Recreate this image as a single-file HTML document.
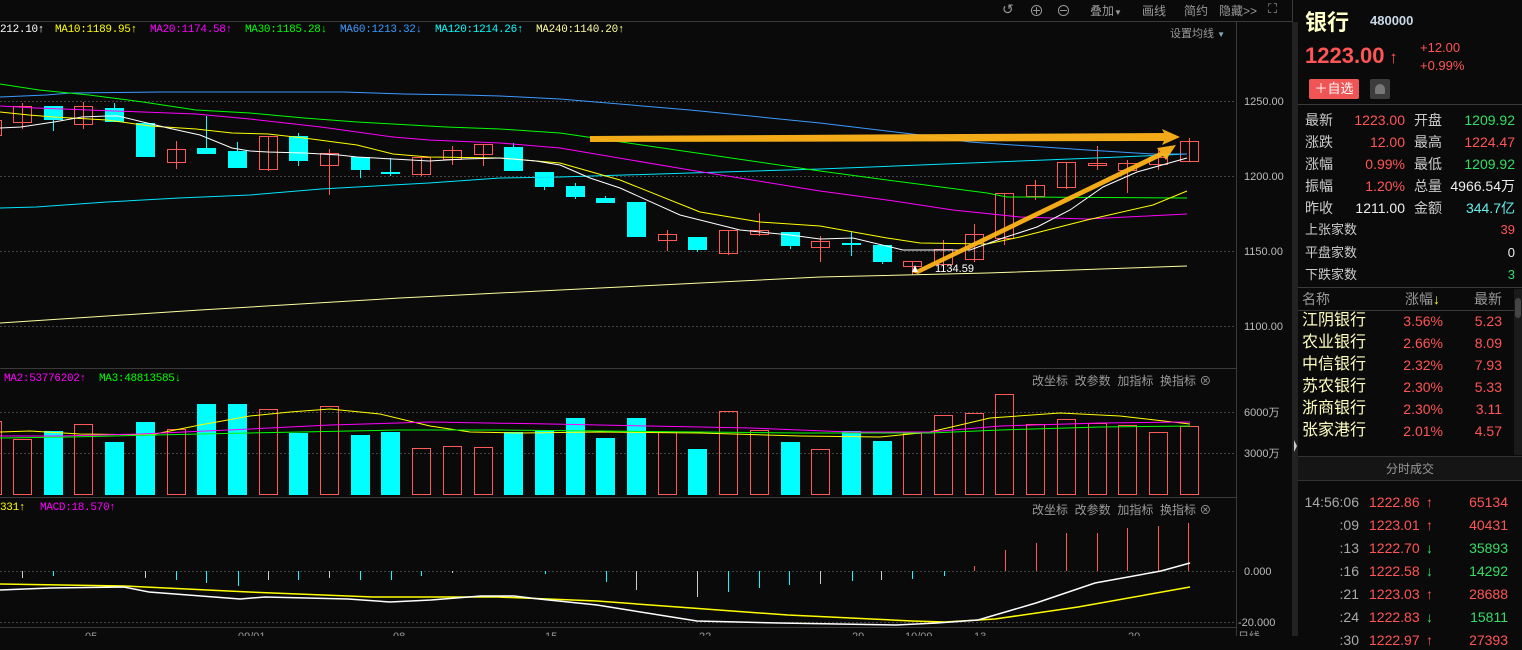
<!DOCTYPE html>
<html><head><meta charset="utf-8">
<style>
*{margin:0;padding:0;box-sizing:border-box}
body{width:1522px;height:636px;background:#0a0a0a;overflow:hidden;position:relative;font-family:"Liberation Sans","Noto Sans CJK SC",sans-serif;color:#ccc}
.a{position:absolute;white-space:nowrap}
.t11{font-size:11px}
.m{font-family:"Liberation Mono","Noto Sans CJK SC",monospace;font-size:11px;position:absolute;white-space:nowrap;letter-spacing:-0.3px}
.g{color:#999}
.rp{position:absolute;left:1298px;top:0;width:224px;height:636px;background:#0a0a0a}
.row{position:absolute;left:1305px;width:210px;font-size:14px;height:20px;line-height:20px}
.row span{position:absolute}
.hl{position:absolute;height:1px;background:#3a3a3a}
</style></head><body>
<svg id="ch" class="a" style="left:0;top:0" width="1298" height="636" xmlns="http://www.w3.org/2000/svg">
<g stroke="#3a3a3a" stroke-width="1">
<line x1="0" y1="21.5" x2="1292" y2="21.5"/>
<line x1="0" y1="368.5" x2="1236" y2="368.5"/>
<line x1="0" y1="497.5" x2="1236" y2="497.5"/>
<line x1="0" y1="627.5" x2="1236" y2="627.5"/>
<line x1="1236.5" y1="21" x2="1236.5" y2="636"/>
<line x1="1292.5" y1="0" x2="1292.5" y2="636"/>
</g>
<g stroke="#444" stroke-dasharray="2,2">
<line x1="0" y1="101.5" x2="1236" y2="101.5"/><line x1="0" y1="176.5" x2="1236" y2="176.5"/>
<line x1="0" y1="251.5" x2="1236" y2="251.5"/><line x1="0" y1="326.5" x2="1236" y2="326.5"/>
<line x1="0" y1="412.5" x2="1236" y2="412.5"/><line x1="0" y1="453.5" x2="1236" y2="453.5"/>
<line x1="0" y1="571.5" x2="1236" y2="571.5"/><line x1="0" y1="622.5" x2="1236" y2="622.5"/>
</g>
<g id="dyn"></g>
<g font-size="11" fill="#bbb" font-family="Liberation Sans, Noto Sans CJK SC, sans-serif">
<text x="1244" y="105">1250.00</text><text x="1244" y="180">1200.00</text><text x="1244" y="255">1150.00</text><text x="1244" y="330">1100.00</text>
<text x="1244" y="416">6000万</text><text x="1244" y="457">3000万</text>
<text x="1244" y="575">0.000</text><text x="1238" y="626">-20.000</text>
<text x="935" y="272" fill="#fff">1134.59</text>
</g>
<g font-size="11" fill="#999"><text x="85" y="640">05</text><text x="238" y="640">09/01</text><text x="393" y="640">08</text><text x="545" y="640">15</text><text x="699" y="640">22</text><text x="852" y="640">29</text><text x="905" y="640">10/09</text><text x="974" y="640">13</text><text x="1128" y="640">20</text><text x="1238" y="640">日线</text></g>
<rect x="1292" y="22" width="6" height="614" fill="#222"/>
<path d="M1294 440 L1297 446 L1294 452Z" fill="#ccc"/>
</svg>

<div class="m" style="left:0;top:24px;color:#fff">212.10↑</div>
<div class="m" style="left:55px;top:24px;color:#ff0">MA10:1189.95↑</div>
<div class="m" style="left:150px;top:24px;color:#f0f">MA20:1174.58↑</div>
<div class="m" style="left:245px;top:24px;color:#0f0">MA30:1185.28↓</div>
<div class="m" style="left:340px;top:24px;color:#3a9bff">MA60:1213.32↓</div>
<div class="m" style="left:435px;top:24px;color:#0ff">MA120:1214.26↑</div>
<div class="m" style="left:536px;top:24px;color:#ffffa0">MA240:1140.20↑</div>
<div class="a t11 g" style="left:1170px;top:25px">设置均线 <span style="color:#8ab;font-size:8px">▼</span></div>
<div class="a g" style="left:1002px;top:1px;font-size:14px">↺</div>
<div class="a g" style="left:1029px;top:0px;font-size:15px">⊕</div>
<div class="a g" style="left:1056px;top:0px;font-size:15px">⊖</div>
<div class="a g" style="left:1090px;top:2px;font-size:12px">叠加<span style="font-size:8px">▼</span></div>
<div class="a g" style="left:1142px;top:2px;font-size:12px">画线</div>
<div class="a g" style="left:1184px;top:2px;font-size:12px">简约</div>
<div class="a g" style="left:1219px;top:2px;font-size:12px">隐藏&gt;&gt;</div>
<div class="a g" style="left:1268px;top:1px;font-size:13px">⛶</div>

<div class="m" style="left:4px;top:373px;color:#f0f">MA2:53776202↑</div>
<div class="m" style="left:99px;top:373px;color:#0f0">MA3:48813585↓</div>
<div class="m" style="left:0;top:502px;color:#ff0">331↑</div>
<div class="m" style="left:40px;top:502px;color:#f0f">MACD:18.570↑</div>
<div class="a g" style="left:1032px;top:372px;font-size:12px">改坐标&nbsp;&nbsp;改参数&nbsp;&nbsp;加指标&nbsp;&nbsp;换指标 ⊗</div>
<div class="a g" style="left:1032px;top:501px;font-size:12px">改坐标&nbsp;&nbsp;改参数&nbsp;&nbsp;加指标&nbsp;&nbsp;换指标 ⊗</div>

<div class="rp">
<div class="a" style="left:7px;top:5px;font-size:22px;font-weight:bold;color:#ffffc8">银行</div>
<div class="a" style="left:72px;top:13px;font-size:13px;font-weight:bold;color:#c8d8e8">480000</div>
<div class="a" style="left:7px;top:43px;font-size:22px;font-weight:bold;color:#ff5555">1223.00<span style="font-size:17px"> ↑</span></div>
<div class="a" style="left:122px;top:40px;font-size:13px;color:#ff5555">+12.00</div>
<div class="a" style="left:122px;top:58px;font-size:13px;color:#ff5555">+0.99%</div>
<div class="a" style="left:11px;top:79px;width:50px;height:20px;background:#f05555;color:#fff;font-size:13px;line-height:20px;text-align:center;border-radius:2px">＋自选</div>
<div class="a" style="left:72px;top:79px;width:20px;height:20px;background:#3c3c3c;border-radius:2px"><div style="position:absolute;left:5px;top:5px;width:10px;height:10px;background:#777;border-radius:5px 5px 1px 1px"></div></div>
</div>
<div class="hl" style="left:1298px;top:104px;width:224px"></div>
<div class="row" style="top:110px"><span style="left:0">最新</span><span style="right:110px;color:#ff5555">1223.00</span><span style="left:109px">开盘</span><span style="right:0;color:#33dd66">1209.92</span></div>
<div class="row" style="top:132px"><span style="left:0">涨跌</span><span style="right:110px;color:#ff5555">12.00</span><span style="left:109px">最高</span><span style="right:0;color:#ff5555">1224.47</span></div>
<div class="row" style="top:154px"><span style="left:0">涨幅</span><span style="right:110px;color:#ff5555">0.99%</span><span style="left:109px">最低</span><span style="right:0;color:#33dd66">1209.92</span></div>
<div class="row" style="top:176px"><span style="left:0">振幅</span><span style="right:110px;color:#ff5555">1.20%</span><span style="left:109px">总量</span><span style="right:0;color:#eee">4966.54万</span></div>
<div class="row" style="top:198px"><span style="left:0">昨收</span><span style="right:110px;color:#eee">1211.00</span><span style="left:109px">金额</span><span style="right:0;color:#66eeee">344.7亿</span></div>
<div class="row" style="top:220px;font-size:13px"><span style="left:0">上张家数</span><span style="right:0;color:#ff5555">39</span></div>
<div class="row" style="top:243px;font-size:13px"><span style="left:0">平盘家数</span><span style="right:0;color:#eee">0</span></div>
<div class="row" style="top:265px;font-size:13px"><span style="left:0">下跌家数</span><span style="right:0;color:#33dd66">3</span></div>
<div class="hl" style="left:1298px;top:287px;width:224px"></div>
<div class="row g" style="top:289px;left:1302px"><span style="left:0">名称</span><span style="left:103px">涨幅<span style="color:#ff0">↓</span></span><span style="left:172px">最新</span></div>
<div class="hl" style="left:1298px;top:310px;width:216px"></div>
<div class="a" style="left:1514px;top:289px;width:8px;height:166px;background:#1a1a1a"></div>
<div class="a" style="left:1515px;top:298px;width:6px;height:20px;background:#444;border-radius:3px"></div>
<div id="lst"></div>
<div class="a" style="left:1298px;top:456px;width:224px;height:25px;background:#151515;border-top:1px solid #333;border-bottom:1px solid #333;color:#999;font-size:12px;text-align:center;line-height:24px">分时成交</div>
<div id="trd"></div>

<script>
var NS="http://www.w3.org/2000/svg",d=document.getElementById("dyn");
function el(t,a){var e=document.createElementNS(NS,t);for(var k in a)e.setAttribute(k,a[k]);d.appendChild(e);return e}
function pl(pts,c,w){el("polyline",{points:pts.map(p=>p.join(",")).join(" "),fill:"none",stroke:c,"stroke-width":w||1})}
var R="#ff5a5a",C="#00ffff";
var cd=[[106,122,103,129,1],[106,120,106,131,0],[106,124,102,129,1],[108,122,103,122,0],[123,157,123,157,0],[149,162,141,169,1],[148,154,116,154,0],[151,168,142,168,0],[136,169,136,171,1],[136,161,133,166,0],[153,165,149,195,1],[157,170,157,178,0],[172,174,158,176,0],[157,174,157,176,1],[150,159,146,165,1],[144,154,144,166,1],[147,171,143,171,0],[172,187,172,190,0],[186,197,183,199,0],[198,203,196,203,0],[202,237,202,237,0],[234,240,230,251,1],[237,250,237,252,0],[230,253,230,255,1],[230,234,213,236,1],[232,246,232,249,0],[241,247,236,262,1],[243,245,232,256,0],[245,262,245,264,0],[261,266,261,275,1],[249,264,240,264,1],[234,259,224,262,1],[193,238,193,245,1],[185,196,180,200,1],[162,187,162,189,1],[163,165,146,170,1],[163,170,160,193,1],[157,164,150,170,1],[141,161,138,161,1]];
var vol=[439,431,424,442,422,429,404,404,409,433,406,435,432,448,446,447,432,431,418,438,418,432,449,411,430,442,449,431,441,433,415,413,394,424,419,423,425,432,426];
cd.forEach(function(c,i){var x=Math.round(22+i*30.7),col=c[4]?R:C;
 el("line",{x1:x+.5,y1:c[2],x2:x+.5,y2:c[3],stroke:col});
 if(c[4])el("rect",{x:x-9+.5,y:c[0]+.5,width:18,height:Math.max(1,c[1]-c[0]),fill:"none",stroke:col});
 else el("rect",{x:x-9,y:c[0],width:19,height:Math.max(2,c[1]-c[0]),fill:col});
 var v=vol[i];
 if(c[4])el("rect",{x:x-9+.5,y:v+.5,width:18,height:494-v,fill:"none",stroke:col});
 else el("rect",{x:x-9,y:v,width:19,height:495-v,fill:col});
});
el("rect",{x:-10.5,y:120.5,width:12,height:15,fill:"none",stroke:R});
el("rect",{x:-10.5,y:421.5,width:12,height:73,fill:"none",stroke:R});
pl([[0,323],[200,310],[400,298],[600,288],[820,277],[987,273],[1187,266]],"#ffffa0");
pl([[0,208],[36,207],[107,202],[179,198],[250,195],[321,189],[357,187],[429,183],[500,178],[560,177],[690,173],[820,169],[920,165],[1020,161],[1120,157],[1187,154]],"#00e5ff");
pl([[0,97],[46,95],[71,93],[161,92],[343,92],[404,94],[464,95],[500,96],[560,99],[690,110],[820,123],[920,135],[970,142],[1087,150],[1153,154],[1187,154]],"#3a9bff");
pl([[0,84],[39,90],[89,95],[143,102],[196,110],[250,113],[304,118],[357,122],[393,124],[446,127],[500,129],[560,133],[690,152],[820,171],[887,180],[987,193],[1007,197],[1187,198]],"#00ff00");
pl([[0,106],[36,108],[143,112],[196,114],[250,119],[321,127],[357,132],[393,137],[429,140],[500,143],[560,148],[690,170],[820,191],[887,200],[953,210],[1020,217],[1087,219],[1187,214]],"#ff00ff");
pl([[0,112],[29,115],[54,117],[107,120],[150,126],[196,129],[232,133],[268,134],[304,138],[357,145],[393,154],[429,157],[500,158],[536,161],[560,163],[620,180],[700,212],[760,222],[820,226],[887,238],[920,243],[987,244],[1020,237],[1087,220],[1153,205],[1187,191]],"#ffff00");
pl([[0,128],[21,127],[54,122],[82,117],[107,116],[118,116],[143,122],[168,128],[200,135],[232,148],[250,151],[268,152],[304,153],[339,155],[357,157],[393,159],[429,161],[464,159],[500,158],[536,161],[560,165],[590,178],[620,188],[680,215],[740,230],[790,235],[820,239],[853,238],[903,250],[970,250],[1003,238],[1037,227],[1070,210],[1103,187],[1137,172],[1187,158]],"#ffffff");
pl([[0,432],[30,431],[80,434],[150,435],[200,425],[250,416],[290,412],[330,409],[380,414],[430,426],[470,432],[520,433],[600,432],[700,433],[800,436],[880,437],[930,432],[990,418],[1060,413],[1120,416],[1190,424]],"#ffff00");
pl([[0,436],[60,436],[140,434],[250,429],[330,425],[430,422],[550,424],[650,426],[750,428],[850,432],[930,432],[1000,426],[1100,423],[1190,422]],"#ff00ff");
pl([[0,438],[70,437],[200,434],[300,432],[400,430],[500,430],[600,431],[700,432],[800,433],[930,433],[1000,430],[1100,427],[1190,426]],"#00ff00");
var nb=[[22,578,0],[53,576,1],[145,578,0],[176,580,1],[206,583,1],[238,586,1],[268,580,0],[298,580,1],[329,578,0],[360,580,1],[391,580,1],[421,576,1],[452,573,0],[545,574,1],[606,582,1],[636,590,0],[697,597,0],[728,592,1],[759,588,1],[789,585,1],[820,584,0],[852,581,1],[881,580,0],[912,579,1],[944,576,1]];
nb.forEach(function(b){el("line",{x1:b[0]+.5,y1:571,x2:b[0]+.5,y2:b[1],stroke:b[2]?C:"#ccc"})});
[[974,566],[1005,550],[1036,543],[1066,533],[1097,533],[1127,528],[1158,526],[1188,523]].forEach(function(b){el("line",{x1:b[0]+.5,y1:571,x2:b[0]+.5,y2:b[1],stroke:R})});
pl([[0,584],[124,586],[249,592],[373,597],[498,597],[597,601],[705,609],[788,615],[912,621],[945,622],[995,619],[1078,607],[1190,587]],"#ffff00",1.5);
pl([[0,590],[50,588],[124,587],[149,592],[240,599],[265,597],[348,599],[390,602],[431,600],[481,596],[514,596],[539,599],[597,605],[697,621],[779,623],[896,625],[937,623],[978,620],[1036,603],[1095,583],[1161,571],[1190,563]],"#ffffff",1.5);
el("polygon",{points:"590,136 1164,133 1162,129 1180,137 1162,145 1164,141 590,142",fill:"#ffb319",opacity:"0.95"});
el("polygon",{points:"912,272 1160,152 1157,148 1176,145 1166,160 1163,156 918,274",fill:"#ffb319",opacity:"0.95"});
el("polygon",{points:"912,272 915,265 918,272",fill:"#fff"});
var L=[["江阴银行","3.56%","5.23"],["农业银行","2.66%","8.09"],["中信银行","2.32%","7.93"],["苏农银行","2.30%","5.33"],["浙商银行","2.30%","3.11"],["张家港行","2.01%","4.57"]],h="";
L.forEach(function(r,i){h+='<div class="row" style="top:'+(311+i*22)+'px;left:1302px"><span style="left:0;font-size:16px;color:#ffffc0">'+r[0]+'</span><span style="right:69px;color:#ff5555">'+r[1]+'</span><span style="right:10px;color:#ff5555">'+r[2]+'</span></div>'});
document.getElementById("lst").innerHTML=h;
var T=[["14:56:06","1222.86",1,"65134"],[":09","1223.01",1,"40431"],[":13","1222.70",0,"35893"],[":16","1222.58",0,"14292"],[":21","1223.03",1,"28688"],[":24","1222.83",0,"15811"],[":30","1222.97",1,"27393"]];h="";
T.forEach(function(r,i){var c=r[2]?"#ff5555":"#33dd66";h+='<div class="row" style="top:'+(492+i*23)+'px;left:1302px"><span style="right:153px;color:#aaa">'+r[0]+'</span><span style="left:67px;color:#ff5555">'+r[1]+'</span><span style="left:124px;color:'+c+';font-weight:bold">'+(r[2]?"↑":"↓")+'</span><span style="right:4px;color:'+c+'">'+r[3]+'</span></div>'});
document.getElementById("trd").innerHTML=h;
</script>
</body></html>
